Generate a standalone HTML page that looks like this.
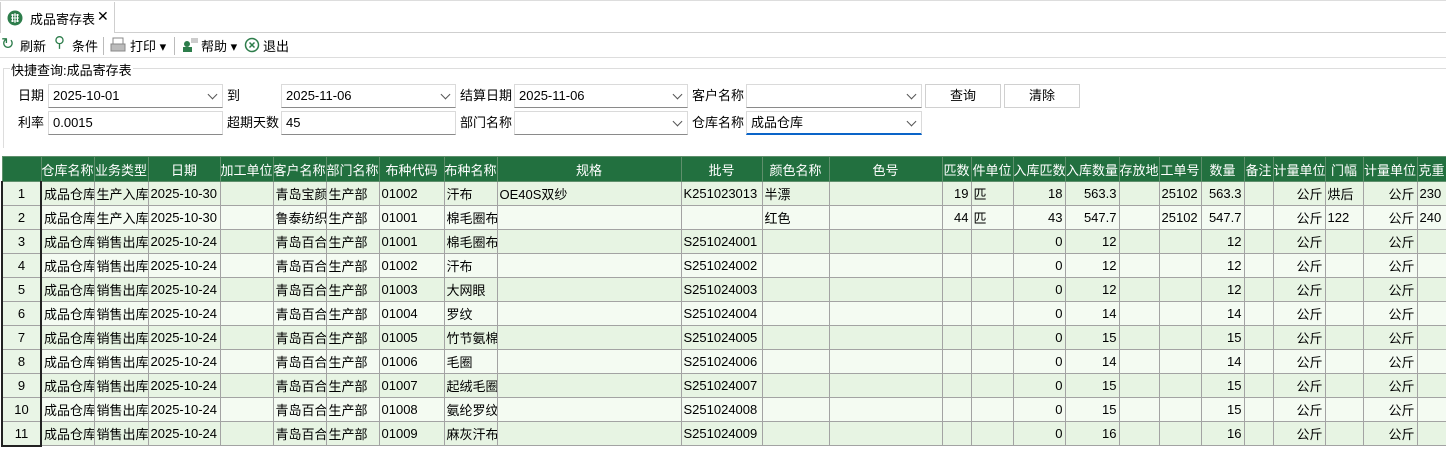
<!DOCTYPE html>
<html><head><meta charset="utf-8"><style>
*{box-sizing:border-box;margin:0;padding:0}
body{width:1446px;height:450px;background:#fff;font-family:"Liberation Sans","Noto Sans CJK SC",sans-serif;font-size:13px;color:#000;position:relative;overflow:hidden}
.abs{position:absolute}
.tabbar{left:0;top:0;width:1446px;height:33px;border-bottom:1px solid #cfcfcf;border-top:1px solid #ddd}
.tab{left:0;top:2px;width:115px;height:31px;border:1px solid #cfcfcf;border-bottom:none;background:#fff;border-top:none}
.tb{top:34px;height:24px;left:0;width:1446px;border-bottom:1px solid #ddd}
.inp{position:absolute;height:24px;border:1px solid #dadada;border-bottom:1px solid #8a8a8a;background:#fff;padding-left:4px;line-height:22px;font-size:13px}
.dd::after{content:"";position:absolute;right:6px;top:6px;width:6px;height:6px;border-right:1px solid #555;border-bottom:1px solid #555;transform:rotate(45deg)}
.lbl{position:absolute;line-height:22px}
.btn{position:absolute;height:24px;border:1px solid #d0d0d0;background:#fff;text-align:center;line-height:22px}
table{position:absolute;left:1px;top:156px;border-collapse:collapse;table-layout:fixed;width:1445px}
td,th{border:1px solid #a3a3a3;height:24px;padding:0 2px;white-space:nowrap;overflow:hidden;font-weight:normal;font-size:13px}
th{background:#22703f;color:#fff;text-align:center;height:25px;border-color:#5f8f6c;padding:0}
tr:nth-child(odd) td{background:#f4fbf2}
tr:nth-child(even) td{background:#e7f4e3}
td.n{background:#e9f5e6!important;text-align:center;border-left:2px solid #222;border-right:2px solid #222}
tr:last-child td.n{border-bottom:2px solid #222}
.r{text-align:right}
</style></head><body>
<div class="abs tabbar"></div>
<div class="abs tab">
<svg class="abs" style="left:6px;top:8px" width="16" height="16" viewBox="0 0 16 16"><circle cx="8" cy="8" r="7.5" fill="#2d7d4b"/><path d="M4 5h8M4 8h8M4 11h8M8 3v10M5.5 4v8M10.5 4v8" stroke="#fff" stroke-width="1"/></svg>
<span class="abs" style="left:29px;top:7px">成品寄存表</span><span class="abs" style="left:96px;top:6px;font-size:14px">✕</span></div>
<div class="abs tb">
<span class="abs" style="left:1px;top:0px;color:#2d7d4b;font-size:16px">↻</span><span class="abs" style="left:20px;top:2px">刷新</span>
<span class="abs" style="left:54px;top:-1px;color:#2d7d4b;font-size:15px">⚲</span><span class="abs" style="left:72px;top:2px">条件</span>
<div class="abs" style="left:103px;top:3px;width:1px;height:18px;background:#bbb"></div>
<svg class="abs" style="left:110px;top:3px" width="16" height="16"><rect x="3" y="1" width="10" height="6" fill="none" stroke="#888"/><rect x="1" y="7" width="14" height="7" fill="#bbb" stroke="#888"/></svg>
<span class="abs" style="left:130px;top:2px">打印 ▾</span>
<div class="abs" style="left:174px;top:3px;width:1px;height:18px;background:#bbb"></div>
<svg class="abs" style="left:181px;top:3px" width="18" height="16"><circle cx="6" cy="7" r="3" fill="#2d7d4b"/><rect x="2" y="10" width="9" height="5" fill="#2d7d4b"/><rect x="10" y="1" width="7" height="5" fill="#ccc"/></svg>
<span class="abs" style="left:201px;top:2px">帮助 ▾</span>
<svg class="abs" style="left:244px;top:3px" width="16" height="16"><circle cx="8" cy="8" r="6.5" fill="none" stroke="#2d7d4b" stroke-width="1.5"/><path d="M5.5 5.5l5 5M10.5 5.5l-5 5" stroke="#2d7d4b" stroke-width="1.5"/></svg>
<span class="abs" style="left:263px;top:2px">退出</span>
</div>
<div class="abs" style="left:3px;top:68px;width:1443px;height:80px;border-top:1px solid #ddd;border-left:1px solid #ddd"></div>
<span class="abs" style="left:10px;top:60px;background:#fff;padding:0 1px">快捷查询:成品寄存表</span>
<span class="lbl" style="left:18px;top:85px">日期</span><div class="inp dd" style="left:48px;top:84px;width:175px">2025-10-01</div>
<span class="lbl" style="left:227px;top:85px">到</span><div class="inp dd" style="left:281px;top:84px;width:175px">2025-11-06</div>
<span class="lbl" style="left:460px;top:85px">结算日期</span><div class="inp dd" style="left:514px;top:84px;width:174px">2025-11-06</div>
<span class="lbl" style="left:692px;top:85px">客户名称</span><div class="inp dd" style="left:746px;top:84px;width:176px"></div>
<div class="btn" style="left:925px;top:84px;width:76px">查询</div><div class="btn" style="left:1004px;top:84px;width:76px">清除</div>
<span class="lbl" style="left:18px;top:112px">利率</span><div class="inp" style="left:48px;top:111px;width:175px">0.0015</div>
<span class="lbl" style="left:227px;top:112px">超期天数</span><div class="inp" style="left:281px;top:111px;width:175px">45</div>
<span class="lbl" style="left:460px;top:112px">部门名称</span><div class="inp dd" style="left:514px;top:111px;width:174px"></div>
<span class="lbl" style="left:692px;top:112px">仓库名称</span><div class="inp dd" style="left:746px;top:111px;width:176px;border-bottom:2px solid #0a64c8">成品仓库</div>
<table>
<colgroup><col style="width:39px"><col style="width:53px"><col style="width:54px"><col style="width:72px"><col style="width:53px"><col style="width:53px"><col style="width:53px"><col style="width:65px"><col style="width:53px"><col style="width:184px"><col style="width:81px"><col style="width:67px"><col style="width:113px"><col style="width:29px"><col style="width:42px"><col style="width:52px"><col style="width:54px"><col style="width:40px"><col style="width:42px"><col style="width:43px"><col style="width:29px"><col style="width:52px"><col style="width:38px"><col style="width:54px"><col style="width:29px"></colgroup>
<tr><th></th><th>仓库名称</th><th>业务类型</th><th>日期</th><th>加工单位</th><th>客户名称</th><th>部门名称</th><th>布种代码</th><th>布种名称</th><th>规格</th><th>批号</th><th>颜色名称</th><th>色号</th><th>匹数</th><th>件单位</th><th>入库匹数</th><th>入库数量</th><th>存放地</th><th>工单号</th><th>数量</th><th>备注</th><th>计量单位</th><th>门幅</th><th>计量单位</th><th>克重</th></tr>
<tr><td class="n">1</td><td>成品仓库</td><td>生产入库</td><td>2025-10-30</td><td></td><td>青岛宝颜</td><td>生产部</td><td>01002</td><td>汗布</td><td>OE40S双纱</td><td>K251023013</td><td>半漂</td><td></td><td class="r">19</td><td>匹</td><td class="r">18</td><td class="r">563.3</td><td></td><td>25102</td><td class="r">563.3</td><td></td><td class="r">公斤</td><td>烘后</td><td class="r">公斤</td><td>230</td></tr>
<tr><td class="n">2</td><td>成品仓库</td><td>生产入库</td><td>2025-10-30</td><td></td><td>鲁泰纺织</td><td>生产部</td><td>01001</td><td>棉毛圈布</td><td></td><td></td><td>红色</td><td></td><td class="r">44</td><td>匹</td><td class="r">43</td><td class="r">547.7</td><td></td><td>25102</td><td class="r">547.7</td><td></td><td class="r">公斤</td><td>122</td><td class="r">公斤</td><td>240</td></tr>
<tr><td class="n">3</td><td>成品仓库</td><td>销售出库</td><td>2025-10-24</td><td></td><td>青岛百合</td><td>生产部</td><td>01001</td><td>棉毛圈布</td><td></td><td>S251024001</td><td></td><td></td><td></td><td></td><td class="r">0</td><td class="r">12</td><td></td><td></td><td class="r">12</td><td></td><td class="r">公斤</td><td></td><td class="r">公斤</td><td></td></tr>
<tr><td class="n">4</td><td>成品仓库</td><td>销售出库</td><td>2025-10-24</td><td></td><td>青岛百合</td><td>生产部</td><td>01002</td><td>汗布</td><td></td><td>S251024002</td><td></td><td></td><td></td><td></td><td class="r">0</td><td class="r">12</td><td></td><td></td><td class="r">12</td><td></td><td class="r">公斤</td><td></td><td class="r">公斤</td><td></td></tr>
<tr><td class="n">5</td><td>成品仓库</td><td>销售出库</td><td>2025-10-24</td><td></td><td>青岛百合</td><td>生产部</td><td>01003</td><td>大网眼</td><td></td><td>S251024003</td><td></td><td></td><td></td><td></td><td class="r">0</td><td class="r">12</td><td></td><td></td><td class="r">12</td><td></td><td class="r">公斤</td><td></td><td class="r">公斤</td><td></td></tr>
<tr><td class="n">6</td><td>成品仓库</td><td>销售出库</td><td>2025-10-24</td><td></td><td>青岛百合</td><td>生产部</td><td>01004</td><td>罗纹</td><td></td><td>S251024004</td><td></td><td></td><td></td><td></td><td class="r">0</td><td class="r">14</td><td></td><td></td><td class="r">14</td><td></td><td class="r">公斤</td><td></td><td class="r">公斤</td><td></td></tr>
<tr><td class="n">7</td><td>成品仓库</td><td>销售出库</td><td>2025-10-24</td><td></td><td>青岛百合</td><td>生产部</td><td>01005</td><td>竹节氨棉</td><td></td><td>S251024005</td><td></td><td></td><td></td><td></td><td class="r">0</td><td class="r">15</td><td></td><td></td><td class="r">15</td><td></td><td class="r">公斤</td><td></td><td class="r">公斤</td><td></td></tr>
<tr><td class="n">8</td><td>成品仓库</td><td>销售出库</td><td>2025-10-24</td><td></td><td>青岛百合</td><td>生产部</td><td>01006</td><td>毛圈</td><td></td><td>S251024006</td><td></td><td></td><td></td><td></td><td class="r">0</td><td class="r">14</td><td></td><td></td><td class="r">14</td><td></td><td class="r">公斤</td><td></td><td class="r">公斤</td><td></td></tr>
<tr><td class="n">9</td><td>成品仓库</td><td>销售出库</td><td>2025-10-24</td><td></td><td>青岛百合</td><td>生产部</td><td>01007</td><td>起绒毛圈</td><td></td><td>S251024007</td><td></td><td></td><td></td><td></td><td class="r">0</td><td class="r">15</td><td></td><td></td><td class="r">15</td><td></td><td class="r">公斤</td><td></td><td class="r">公斤</td><td></td></tr>
<tr><td class="n">10</td><td>成品仓库</td><td>销售出库</td><td>2025-10-24</td><td></td><td>青岛百合</td><td>生产部</td><td>01008</td><td>氨纶罗纹</td><td></td><td>S251024008</td><td></td><td></td><td></td><td></td><td class="r">0</td><td class="r">15</td><td></td><td></td><td class="r">15</td><td></td><td class="r">公斤</td><td></td><td class="r">公斤</td><td></td></tr>
<tr><td class="n">11</td><td>成品仓库</td><td>销售出库</td><td>2025-10-24</td><td></td><td>青岛百合</td><td>生产部</td><td>01009</td><td>麻灰汗布</td><td></td><td>S251024009</td><td></td><td></td><td></td><td></td><td class="r">0</td><td class="r">16</td><td></td><td></td><td class="r">16</td><td></td><td class="r">公斤</td><td></td><td class="r">公斤</td><td></td></tr>
</table>
</body></html>
